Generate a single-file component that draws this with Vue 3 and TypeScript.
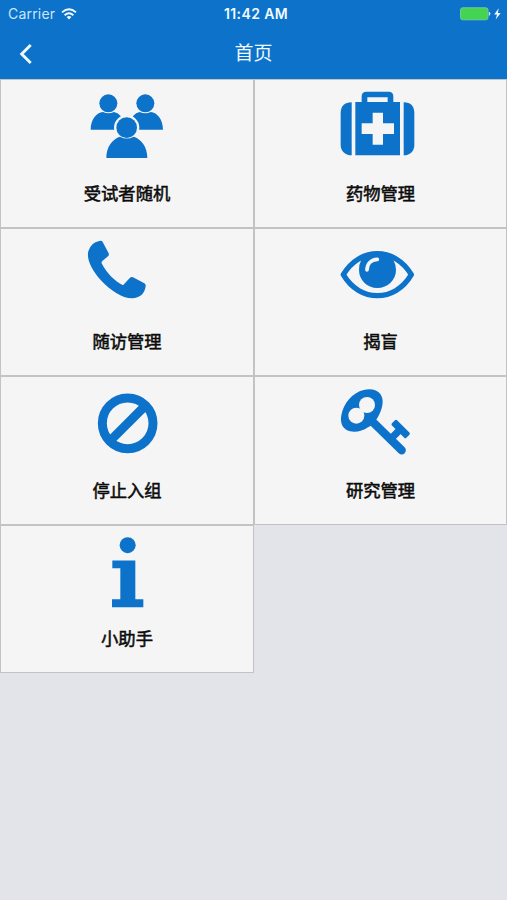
<script setup lang="ts">
type IconName = 'group' | 'medkit' | 'phone' | 'eye' | 'ban' | 'key' | 'info'

interface MenuItem {
  label: string
  icon: IconName
  viewBox: string
}

const items: MenuItem[] = [
  { label: '受试者随机', icon: 'group', viewBox: '-1 0 285 240' },
  { label: '药物管理', icon: 'medkit', viewBox: '8 0 285 240' },
  { label: '随访管理', icon: 'phone', viewBox: '0 -4 285 240' },
  { label: '揭盲', icon: 'eye', viewBox: '9 -4 285 240' },
  { label: '停止入组', icon: 'ban', viewBox: '0 -9 285 240' },
  { label: '研究管理', icon: 'key', viewBox: '9 5 285 240' },
  { label: '小助手', icon: 'info', viewBox: '-1 2.4 285 240' },
]
</script>

<template>
  <div class="screen">
    <header class="header">
      <div class="status">
        <div class="carrier">
          <span>Carrier</span>
          <svg class="wifi" viewBox="0 0 16 12">
            <g fill="none" stroke="currentColor" stroke-width="1.9">
              <path d="M1 4.4Q8 -1.7 15 4.4" />
              <path d="M3.6 7.2Q8 3.4 12.4 7.2" />
            </g>
            <path d="M5.6 9Q8 7.2 10.4 9L8 11.5Z" fill="currentColor" />
          </svg>
        </div>
        <span class="time">11:42 AM</span>
        <div class="power">
          <svg class="battery" viewBox="0 0 41 14">
            <rect x=".5" y=".8" width="27.5" height="12" rx="2.2" fill="#43d551" stroke="#73c69e" />
            <path d="M29.2 5Q31.2 6.7 29.2 8.5Z" fill="#e3f4ff" stroke="#e3f4ff" stroke-width=".5" />
            <path d="M38.7 1.2L34.2 7.4H37L35.7 12.6L40.7 6.1H37.9Z" fill="#eff9ff" />
          </svg>
        </div>
      </div>
      <nav class="nav">
        <button class="back" type="button" aria-label="返回">
          <svg viewBox="0 0 14 22"><path d="M11.7 2L2.7 11L11.7 20" fill="none" stroke="currentColor" stroke-width="2.9" /></svg>
        </button>
        <h1 class="title">首页</h1>
      </nav>
    </header>

    <main class="grid">
      <div v-for="item in items" :key="item.icon" class="cell">
        <svg class="icon" :viewBox="item.viewBox">
          <template v-if="item.icon === 'group'">
            <circle cx="84" cy="55" r="27" />
            <path d="M31 134C31 103 48 83 68 81Q84 89 101 81Q112 83 121 93V134Z" />
            <circle cx="195" cy="55" r="27" />
            <path d="M248 134C248 103 231 83 211 81Q195 89 178 81Q167 83 158 93V134Z" />
            <circle cx="139" cy="128" r="38" fill="#f5f5f5" />
            <circle cx="139" cy="128" r="31" />
            <path d="M78 219C78 184 97 162 119 155Q139 166 160 155C182 162 201 184 201 219Z" />
          </template>

          <template v-else-if="item.icon === 'medkit'">
            <path d="M64 52V211C43 211 31 197 31 179V84C31 64 43 52 64 52Z" />
            <path d="M220 52V211C241 211 252 197 252 179V84C252 64 241 52 220 52Z" />
            <path fill-rule="evenodd" d="M75 51H94V34Q94 20 108 20H175Q189 20 189 34V51H209V211H75ZM111 51H172V37H111ZM127 83V115H94V147H127V179H158V147H191V115H158V83Z" />
          </template>

          <path
            v-else-if="item.icon === 'phone'"
            d="M58 17Q65 14 68 20L86 54Q88 60 84 63L67 77Q63 81 66 86C80 113 104 137 129 150L150 127Q154 123 159 126L193 144Q198 147 197 153C194 175 180 188 156 189C127 189 90 165 62 134C34 103 19 70 25 48Q32 22 58 17Z"
          />

          <template v-else-if="item.icon === 'eye'">
            <path d="M40 118C89 34 195 34 244 118C195 202 89 202 40 118Z" fill="none" stroke="currentColor" stroke-width="16" stroke-linejoin="round" />
            <path d="M94 73Q142 42 190 73Q198 88 198 104C198 134 173 158 142 158C111 158 87 134 87 104Q87 86 94 73Z" />
            <path d="M111 104C111 85 123 73 142 72" fill="none" stroke="#f5f5f5" stroke-width="11" stroke-linecap="round" />
          </template>

          <g v-else-if="item.icon === 'ban'" fill="none" stroke="currentColor" stroke-width="27">
            <circle cx="143" cy="115" r="76" />
            <path d="M91 167L195 63" />
          </g>

          <template v-else-if="item.icon === 'key'">
            <path d="M101 29C121 23 142 28 151 41C163 57 158 82 148 102C139 121 127 135 114 141C98 152 78 157 60 153C40 149 29 130 34 105C40 69 67 37 101 29Z" />
            <g stroke="currentColor">
              <path d="M120 117L215 210" fill="none" stroke-width="25" stroke-linecap="round" />
              <path d="M185 173L212 146" fill="none" stroke-width="22" />
              <path d="M198 123L235 160L226 169L189 132Z" stroke-width="9" stroke-linejoin="round" />
            </g>
            <circle cx="111" cy="74" r="24" fill="#f5f5f5" />
            <circle cx="79" cy="106" r="24" fill="#f5f5f5" />
          </template>

          <template v-else>
            <circle cx="142" cy="45" r="24" />
            <path d="M96 91H165V207H189V231H95V207H120V114H96Z" />
          </template>
        </svg>
        <span class="label">{{ item.label }}</span>
      </div>
    </main>
  </div>
</template>

<style>
body {
  background: #e3e4ea;
}
</style>

<style scoped>
.screen {
  min-height: 900px;
  background: #e3e4ea;
  font-family: Inter, "Noto Sans CJK SC", sans-serif;
}

.header {
  height: 79px;
  background: #0d72ca;
  color: #f0faff;
}

.status {
  display: grid;
  grid-template-columns: 1fr auto 1fr;
  align-items: center;
  height: 27px;
  padding: 0 6px 0 8px;
  font-size: 14px;
}

.carrier {
  display: flex;
  align-items: center;
  gap: 6px;
  color: #cce6fb;
  letter-spacing: 0.2px;
}

.wifi {
  width: 16px;
  height: 12px;
  color: #f0faff;
}

.time {
  padding-left: 3px;
  font-size: 14px;
  font-weight: 600;
  letter-spacing: 0.4px;
}

.power {
  display: flex;
  justify-content: flex-end;
}

.battery {
  width: 41px;
  height: 14px;
}

.nav {
  display: grid;
  grid-template-columns: 60px 1fr 60px;
  align-items: center;
  height: 52px;
}

.back {
  display: flex;
  padding: 0 0 0 19px;
  border: 0;
  background: none;
  color: inherit;
}

.back svg {
  width: 14px;
  height: 22px;
}

.title {
  margin: 0;
  padding-top: 1px;
  font-size: 19px;
  font-weight: 400;
  line-height: 52px;
  text-align: center;
}

.grid {
  display: grid;
  grid-template-columns: 254px 253px;
  grid-auto-rows: 148.6px;
}

.cell {
  display: flex;
  flex-direction: column;
  align-items: center;
  box-sizing: border-box;
  padding-top: 5px;
  border: 1px solid #c3c3c3;
  background: #f5f5f5;
}

.icon {
  flex: none;
  width: 95px;
  height: 80px;
  fill: #0d72ca;
  color: #0d72ca;
}

.label {
  margin-top: 16.6px;
  color: #0c0c0c;
  font-size: 17.3px;
  font-weight: 400;
  line-height: 24px;
  -webkit-text-stroke: 0.55px #0c0c0c;
}
</style>
